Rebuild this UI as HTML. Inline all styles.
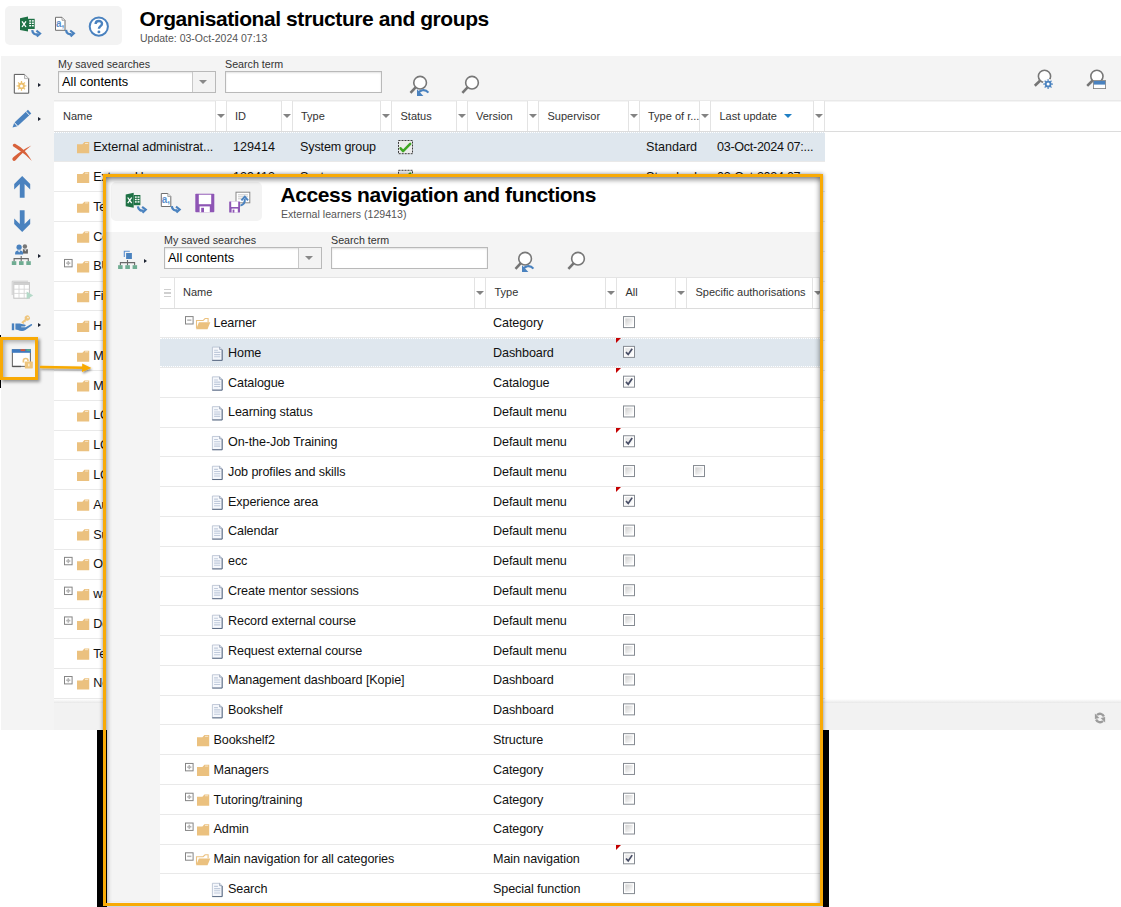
<!DOCTYPE html>
<html><head><meta charset="utf-8"><title>Organisational structure and groups</title>
<style>
*{box-sizing:border-box}
html,body{margin:0;padding:0}
body{width:1121px;height:907px;position:relative;overflow:hidden;background:#fff;font-family:"Liberation Sans",sans-serif;color:#1a1a1a}
.a{position:absolute}
.t{position:absolute;white-space:nowrap;line-height:1}
.h{font-size:11px;color:#333}
.r{font-size:12.6px;color:#111}
.lbl{font-size:10.7px;color:#333}
.inp{position:absolute;background:#fff;border:1px solid #b9b9b9;box-shadow:inset 0 1px 2px rgba(0,0,0,.12)}
.ddb{position:absolute;background:#f3f3f3;border-left:1px solid #c8c8c8}
.fb{position:absolute;border-left:1px solid #e3e3e3;border-right:1px solid #e3e3e3;background:#fff}
.tri{position:absolute;width:0;height:0;border-left:4px solid transparent;border-right:4px solid transparent;border-top:4.3px solid #838383}
.ln{position:absolute;height:1px;background:#e9e9e9}
svg{position:absolute;overflow:visible}
</style></head>
<body>
<svg width="0" height="0" style="left:0;top:0"><defs><filter id="ds" x="-20%" y="-50%" width="140%" height="250%"><feDropShadow dx="1" dy="1.5" stdDeviation="1" flood-color="#000" flood-opacity=".45"/></filter><linearGradient id="cg" x1="0" y1="0" x2="1" y2="1"><stop offset="0" stop-color="#cfcfcf"/><stop offset="1" stop-color="#ffffff"/></linearGradient></defs></svg>
<div class="a" style="left:5px;top:6px;width:117px;height:39px;background:#f3f3f3;border-radius:5px"></div>
<svg style="left:19px;top:15px;" width="24" height="24" viewBox="0 0 24 24"><path d="M1 3.2 L9 1.6 V16.6 L1 15 Z" fill="#1e7145"/><rect x="9" y="3.8" width="6.7" height="10.2" fill="#1e7145"/><g fill="#fff"><rect x="10.2" y="5.2" width="1.8" height="1.4"/><rect x="12.8" y="5.2" width="2" height="1.4"/><rect x="10.2" y="7.6" width="1.8" height="1.4"/><rect x="12.8" y="7.6" width="2" height="1.4"/><rect x="10.2" y="10" width="1.8" height="1.4"/><rect x="12.8" y="10" width="2" height="1.4"/></g><path d="M3 6.3 L7 12 M7 6.3 L3 12" stroke="#fff" stroke-width="1.3" fill="none"/><g transform="translate(12.4,14.7)"><path d="M0.8 0.4 C1.2 4 3.8 5.4 6.6 4.5" fill="none" stroke="#4a82bf" stroke-width="2.3" stroke-linecap="butt"/><path d="M5 1 L8.7 3.8 L5.4 6.9" fill="none" stroke="#4a82bf" stroke-width="2.1" stroke-linejoin="miter"/></g></svg>
<svg style="left:54px;top:14px;" width="24" height="24" viewBox="0 0 24 24"><g transform="translate(0,0.8)"><path d="M1.5 2.5 H8 L11 5.5 V15.5 H1.5 Z" fill="#fff" stroke="#6f6f6f" stroke-width="1"/><path d="M8 2.5 V5.5 H11" fill="#e8e8e8" stroke="#8a8a8a" stroke-width=".7"/><text x="2" y="12.2" font-family="Liberation Sans" font-size="11.5" font-weight="bold" fill="#5b8fcb" textLength="8.2" lengthAdjust="spacingAndGlyphs">a,</text><g transform="translate(11.2,14.7)"><path d="M0.8 0.4 C1.2 4 3.8 5.4 6.6 4.5" fill="none" stroke="#4a82bf" stroke-width="2.3" stroke-linecap="butt"/><path d="M5 1 L8.7 3.8 L5.4 6.9" fill="none" stroke="#4a82bf" stroke-width="2.1" stroke-linejoin="miter"/></g></g></svg>
<svg style="left:87px;top:14px;" width="24" height="24" viewBox="0 0 24 24"><g transform="translate(0,0.4)"><circle cx="11.8" cy="12.2" r="9.1" fill="#fff" stroke="#4a82bf" stroke-width="2"/><path d="M8.6 9.6 C8.6 5.6 15 5.6 15 9.4 C15 11.8 11.9 11.8 11.9 14.4" fill="none" stroke="#4a82bf" stroke-width="2.4"/><circle cx="11.9" cy="17.5" r="1.45" fill="#4a82bf"/></g></svg>
<div class="t" style="left:139.5px;top:8.2px;font-size:21px;letter-spacing:-0.42px;font-weight:bold;color:#000">Organisational structure and groups</div>
<div class="t" style="left:140px;top:33px;font-size:10.5px;color:#555">Update: 03-Oct-2024 07:13</div>
<div class="a" style="left:1px;top:56px;width:1120px;height:674px;background:#f4f4f4"></div>
<div class="a" style="left:54px;top:101.5px;width:1067px;height:601.5px;background:#fff"></div>
<div class="a" style="left:54px;top:702.6px;width:1067px;height:27.4px;background:#f2f2f2"></div>
<div class="a" style="left:54px;top:698.8px;width:1067px;height:4.2px;background:linear-gradient(#fff,#e8e8e8)"></div>
<svg style="left:1093px;top:711px;" width="14" height="14" viewBox="0 0 14 14"><g fill="#9c9c9c" stroke="none"><path d="M10.9 5.5 A4.1 4.1 0 0 0 4 4.1" fill="none" stroke="#9c9c9c" stroke-width="2.3"/><path d="M1.9 2.5 V7.9 L6.4 7.1 Z"/><path d="M3.1 8.5 A4.1 4.1 0 0 0 10 9.9" fill="none" stroke="#9c9c9c" stroke-width="2.3"/><path d="M12.1 11.5 V6.1 L7.6 6.9 Z"/></g></svg>
<div class="t lbl" style="left:58px;top:59px">My saved searches</div>
<div class="inp" style="left:58px;top:71px;width:158px;height:22px"></div>
<div class="ddb" style="left:192px;top:72px;width:23px;height:20px"></div>
<div class="tri" style="left:199px;top:80px;border-top-color:#888"></div>
<div class="t" style="left:62px;top:75.8px;font-size:12.8px;color:#000">All contents</div>
<div class="t lbl" style="left:225px;top:59px">Search term</div>
<div class="inp" style="left:225px;top:71px;width:157px;height:22px"></div>
<svg style="left:409px;top:74px;" width="26" height="26" viewBox="0 0 26 26"><path d="M6.59 13.45 L1.50 18.80" stroke="#757575" stroke-width="2.6" stroke-linecap="butt"/><circle cx="11.1" cy="8.7" r="6.35" fill="#fff" stroke="#777" stroke-width="1.6"/><path d="M9.2 19.6 C10.4 16 16 14.4 19.4 18.6" fill="none" stroke="#4a82bf" stroke-width="2.1"/><path d="M8 15.2 V22 H14.4 Z" fill="#4a82bf"/></svg>
<svg style="left:459px;top:74px;" width="26" height="26" viewBox="0 0 26 26"><path d="M8.49 13.45 L3.40 18.80" stroke="#757575" stroke-width="2.6" stroke-linecap="butt"/><circle cx="13" cy="8.7" r="6.35" fill="#fff" stroke="#777" stroke-width="1.6"/></svg>
<svg style="left:1032px;top:70px;" width="26" height="26" viewBox="0 0 26 26"><path d="M8.00 10.71 L2.80 15.80" stroke="#757575" stroke-width="2.6" stroke-linecap="butt"/><circle cx="12.5" cy="6.3" r="6.1" fill="#fff" stroke="#777" stroke-width="1.6"/><circle cx="16.1" cy="14.1" r="5.4" fill="#f4f4f4"/><path d="M20.95 13.41 L20.95 14.79 L19.57 14.59 L18.90 16.20 L20.02 17.04 L19.04 18.02 L18.20 16.90 L16.59 17.57 L16.79 18.95 L15.41 18.95 L15.61 17.57 L14.00 16.90 L13.16 18.02 L12.18 17.04 L13.30 16.20 L12.63 14.59 L11.25 14.79 L11.25 13.41 L12.63 13.61 L13.30 12.00 L12.18 11.16 L13.16 10.18 L14.00 11.30 L15.61 10.63 L15.41 9.25 L16.79 9.25 L16.59 10.63 L18.20 11.30 L19.04 10.18 L20.02 11.16 L18.90 12.00 L19.57 13.61Z" fill="#4a82bf"/><circle cx="16.1" cy="14.1" r="1.5" fill="#fff"/></svg>
<svg style="left:1085px;top:70px;" width="26" height="26" viewBox="0 0 26 26"><path d="M7.42 10.73 L2.20 15.90" stroke="#757575" stroke-width="2.6" stroke-linecap="butt"/><circle cx="11.9" cy="6.3" r="6.1" fill="#fff" stroke="#777" stroke-width="1.6"/><rect x="8.4" y="10.6" width="12.2" height="8" fill="#fff" stroke="#7a7a7a" stroke-width=".8"/><rect x="8.8" y="11" width="11.4" height="3.6" fill="#4a82bf"/></svg>
<div class="a" style="left:54px;top:100.3px;width:1067px;height:1.2px;background:#e9e9e9"></div>
<div class="a" style="left:54px;top:131px;width:1067px;height:1px;background:#dcdcdc"></div>
<div class="t h" style="left:63.0px;top:111px">Name</div>
<div class="fb" style="left:214.5px;top:101px;width:12px;height:30px"></div>
<div class="tri" style="left:216.5px;top:114px"></div>
<div class="t h" style="left:235.0px;top:111px">ID</div>
<div class="fb" style="left:280.5px;top:101px;width:12px;height:30px"></div>
<div class="tri" style="left:282.5px;top:114px"></div>
<div class="t h" style="left:301.0px;top:111px">Type</div>
<div class="fb" style="left:380px;top:101px;width:12px;height:30px"></div>
<div class="tri" style="left:382px;top:114px"></div>
<div class="t h" style="left:400.5px;top:111px">Status</div>
<div class="fb" style="left:455.5px;top:101px;width:12px;height:30px"></div>
<div class="tri" style="left:457.5px;top:114px"></div>
<div class="t h" style="left:476.0px;top:111px">Version</div>
<div class="fb" style="left:527px;top:101px;width:12px;height:30px"></div>
<div class="tri" style="left:529px;top:114px"></div>
<div class="t h" style="left:547.5px;top:111px">Supervisor</div>
<div class="fb" style="left:627.5px;top:101px;width:12px;height:30px"></div>
<div class="tri" style="left:629.5px;top:114px"></div>
<div class="t h" style="left:648.0px;top:111px">Type of r...</div>
<div class="fb" style="left:699px;top:101px;width:12px;height:30px"></div>
<div class="tri" style="left:701px;top:114px"></div>
<div class="t h" style="left:719.5px;top:111px">Last update</div>
<div class="fb" style="left:812.5px;top:101px;width:12px;height:30px"></div>
<div class="tri" style="left:814.5px;top:114px"></div>
<div class="tri" style="left:783.5px;top:114px;border-top-color:#1f7fc4"></div>
<div class="a" style="left:54px;top:132.2px;width:770.5px;height:29.49px;background:#dfe7ee;border-top:1px dotted #fff;border-bottom:1px dotted #fff"></div>
<div class="ln" style="left:54px;top:161.49px;width:770.5px"></div>
<svg style="left:77px;top:141px;" width="13" height="12" viewBox="0 0 13 12"><g transform="translate(0,0.9)"><path d="M0 2.4 H5.4 L7.4 0.2 H12.2 V11.4 H0 Z" fill="#ebc17f"/><rect x="8" y="1.1" width="3.2" height=".7" fill="#fff" opacity=".85"/></g></svg>
<div class="t r" style="left:93.3px;top:140.7px;letter-spacing:-0.08px">External administrat...</div>
<div class="t r" style="left:233px;top:140.7px">129414</div>
<div class="t r" style="left:300px;top:140.7px;letter-spacing:-0.15px">System group</div>
<svg style="left:398px;top:139px;" width="16" height="16" viewBox="0 0 16 16"><g transform="translate(0,0.9)"><rect x="0.5" y="0.6" width="14" height="13.2" fill="#ececec" stroke="#3c3c3c" stroke-width="1" stroke-dasharray="2 1"/><path d="M2.6 8.4 L5.1 11.2 L12.2 3.9" fill="none" stroke="#3fa624" stroke-width="2.5" stroke-linecap="round" stroke-linejoin="round"/></g></svg>
<div class="t r" style="left:646px;top:140.7px">Standard</div>
<div class="t r" style="left:717px;top:140.7px;letter-spacing:-0.3px">03-Oct-2024 07:...</div>
<div class="ln" style="left:54px;top:191.28px;width:770.5px"></div>
<svg style="left:77px;top:171px;" width="13" height="12" viewBox="0 0 13 12"><g transform="translate(0,0.69)"><path d="M0 2.4 H5.4 L7.4 0.2 H12.2 V11.4 H0 Z" fill="#ebc17f"/><rect x="8" y="1.1" width="3.2" height=".7" fill="#fff" opacity=".85"/></g></svg>
<div class="t r" style="left:93.3px;top:170.7px;letter-spacing:-0.25px">External learners</div>
<div class="t r" style="left:233px;top:170.7px">129413</div>
<div class="t r" style="left:300px;top:170.7px;letter-spacing:-0.15px">System group</div>
<svg style="left:398px;top:169px;" width="16" height="16" viewBox="0 0 16 16"><g transform="translate(0,0.69)"><rect x="0.5" y="0.6" width="14" height="13.2" fill="#ececec" stroke="#3c3c3c" stroke-width="1" stroke-dasharray="2 1"/><path d="M2.6 8.4 L5.1 11.2 L12.2 3.9" fill="none" stroke="#3fa624" stroke-width="2.5" stroke-linecap="round" stroke-linejoin="round"/></g></svg>
<div class="t r" style="left:646px;top:170.7px">Standard</div>
<div class="t r" style="left:717px;top:170.7px;letter-spacing:-0.3px">03-Oct-2024 07:...</div>
<div class="ln" style="left:54px;top:221.07px;width:770.5px"></div>
<svg style="left:77px;top:201px;" width="13" height="12" viewBox="0 0 13 12"><g transform="translate(0,0.47)"><path d="M0 2.4 H5.4 L7.4 0.2 H12.2 V11.4 H0 Z" fill="#ebc17f"/><rect x="8" y="1.1" width="3.2" height=".7" fill="#fff" opacity=".85"/></g></svg>
<div class="t r" style="left:93.3px;top:200.7px;letter-spacing:-0.25px">Test</div>
<div class="ln" style="left:54px;top:250.86px;width:770.5px"></div>
<svg style="left:77px;top:231px;" width="13" height="12" viewBox="0 0 13 12"><g transform="translate(0,0.27)"><path d="M0 2.4 H5.4 L7.4 0.2 H12.2 V11.4 H0 Z" fill="#ebc17f"/><rect x="8" y="1.1" width="3.2" height=".7" fill="#fff" opacity=".85"/></g></svg>
<div class="t r" style="left:93.3px;top:230.7px;letter-spacing:-0.25px">Co</div>
<div class="ln" style="left:54px;top:280.65px;width:770.5px"></div>
<svg style="left:77px;top:261px;" width="13" height="12" viewBox="0 0 13 12"><g transform="translate(0,0.06)"><path d="M0 2.4 H5.4 L7.4 0.2 H12.2 V11.4 H0 Z" fill="#ebc17f"/><rect x="8" y="1.1" width="3.2" height=".7" fill="#fff" opacity=".85"/></g></svg>
<svg style="left:64px;top:258px;" width="9" height="9" viewBox="0 0 9 9"><g transform="translate(0,0.95)"><rect x="0.5" y="0.5" width="7.6" height="7.4" fill="#fff" stroke="#858585" stroke-width="1"/><rect x="2.2" y="3.4" width="4.2" height="1.6" fill="#b5b5b5"/><rect x="3.5" y="2.1" width="1.6" height="4.2" fill="#b5b5b5"/></g></svg>
<div class="t r" style="left:93.3px;top:259.7px;letter-spacing:-0.25px">BU</div>
<div class="ln" style="left:54px;top:310.44px;width:770.5px"></div>
<svg style="left:77px;top:290px;" width="13" height="12" viewBox="0 0 13 12"><g transform="translate(0,0.84)"><path d="M0 2.4 H5.4 L7.4 0.2 H12.2 V11.4 H0 Z" fill="#ebc17f"/><rect x="8" y="1.1" width="3.2" height=".7" fill="#fff" opacity=".85"/></g></svg>
<div class="t r" style="left:93.3px;top:289.7px;letter-spacing:-0.25px">Fi</div>
<div class="ln" style="left:54px;top:340.23px;width:770.5px"></div>
<svg style="left:77px;top:320px;" width="13" height="12" viewBox="0 0 13 12"><g transform="translate(0,0.63)"><path d="M0 2.4 H5.4 L7.4 0.2 H12.2 V11.4 H0 Z" fill="#ebc17f"/><rect x="8" y="1.1" width="3.2" height=".7" fill="#fff" opacity=".85"/></g></svg>
<div class="t r" style="left:93.3px;top:319.7px;letter-spacing:-0.25px">HR</div>
<div class="ln" style="left:54px;top:370.02px;width:770.5px"></div>
<svg style="left:77px;top:350px;" width="13" height="12" viewBox="0 0 13 12"><g transform="translate(0,0.43)"><path d="M0 2.4 H5.4 L7.4 0.2 H12.2 V11.4 H0 Z" fill="#ebc17f"/><rect x="8" y="1.1" width="3.2" height=".7" fill="#fff" opacity=".85"/></g></svg>
<div class="t r" style="left:93.3px;top:349.7px;letter-spacing:-0.25px">MM</div>
<div class="ln" style="left:54px;top:399.81px;width:770.5px"></div>
<svg style="left:77px;top:380px;" width="13" height="12" viewBox="0 0 13 12"><g transform="translate(0,0.21)"><path d="M0 2.4 H5.4 L7.4 0.2 H12.2 V11.4 H0 Z" fill="#ebc17f"/><rect x="8" y="1.1" width="3.2" height=".7" fill="#fff" opacity=".85"/></g></svg>
<div class="t r" style="left:93.3px;top:379.7px;letter-spacing:-0.25px">MM</div>
<div class="ln" style="left:54px;top:429.60px;width:770.5px"></div>
<svg style="left:77px;top:410px;" width="13" height="12" viewBox="0 0 13 12"><path d="M0 2.4 H5.4 L7.4 0.2 H12.2 V11.4 H0 Z" fill="#ebc17f"/><rect x="8" y="1.1" width="3.2" height=".7" fill="#fff" opacity=".85"/></svg>
<div class="t r" style="left:93.3px;top:408.7px;letter-spacing:-0.25px">LC</div>
<div class="ln" style="left:54px;top:459.39px;width:770.5px"></div>
<svg style="left:77px;top:439px;" width="13" height="12" viewBox="0 0 13 12"><g transform="translate(0,0.79)"><path d="M0 2.4 H5.4 L7.4 0.2 H12.2 V11.4 H0 Z" fill="#ebc17f"/><rect x="8" y="1.1" width="3.2" height=".7" fill="#fff" opacity=".85"/></g></svg>
<div class="t r" style="left:93.3px;top:438.7px;letter-spacing:-0.25px">LC</div>
<div class="ln" style="left:54px;top:489.18px;width:770.5px"></div>
<svg style="left:77px;top:469px;" width="13" height="12" viewBox="0 0 13 12"><g transform="translate(0,0.58)"><path d="M0 2.4 H5.4 L7.4 0.2 H12.2 V11.4 H0 Z" fill="#ebc17f"/><rect x="8" y="1.1" width="3.2" height=".7" fill="#fff" opacity=".85"/></g></svg>
<div class="t r" style="left:93.3px;top:468.7px;letter-spacing:-0.25px">LC</div>
<div class="ln" style="left:54px;top:518.97px;width:770.5px"></div>
<svg style="left:77px;top:499px;" width="13" height="12" viewBox="0 0 13 12"><g transform="translate(0,0.38)"><path d="M0 2.4 H5.4 L7.4 0.2 H12.2 V11.4 H0 Z" fill="#ebc17f"/><rect x="8" y="1.1" width="3.2" height=".7" fill="#fff" opacity=".85"/></g></svg>
<div class="t r" style="left:93.3px;top:498.7px;letter-spacing:-0.25px">Au</div>
<div class="ln" style="left:54px;top:548.76px;width:770.5px"></div>
<svg style="left:77px;top:529px;" width="13" height="12" viewBox="0 0 13 12"><g transform="translate(0,0.16)"><path d="M0 2.4 H5.4 L7.4 0.2 H12.2 V11.4 H0 Z" fill="#ebc17f"/><rect x="8" y="1.1" width="3.2" height=".7" fill="#fff" opacity=".85"/></g></svg>
<div class="t r" style="left:93.3px;top:528.7px;letter-spacing:-0.25px">Su</div>
<div class="ln" style="left:54px;top:578.55px;width:770.5px"></div>
<svg style="left:77px;top:558px;" width="13" height="12" viewBox="0 0 13 12"><g transform="translate(0,0.95)"><path d="M0 2.4 H5.4 L7.4 0.2 H12.2 V11.4 H0 Z" fill="#ebc17f"/><rect x="8" y="1.1" width="3.2" height=".7" fill="#fff" opacity=".85"/></g></svg>
<svg style="left:64px;top:556px;" width="9" height="9" viewBox="0 0 9 9"><g transform="translate(0,0.86)"><rect x="0.5" y="0.5" width="7.6" height="7.4" fill="#fff" stroke="#858585" stroke-width="1"/><rect x="2.2" y="3.4" width="4.2" height="1.6" fill="#b5b5b5"/><rect x="3.5" y="2.1" width="1.6" height="4.2" fill="#b5b5b5"/></g></svg>
<div class="t r" style="left:93.3px;top:557.7px;letter-spacing:-0.25px">Or</div>
<div class="ln" style="left:54px;top:608.34px;width:770.5px"></div>
<svg style="left:77px;top:588px;" width="13" height="12" viewBox="0 0 13 12"><g transform="translate(0,0.74)"><path d="M0 2.4 H5.4 L7.4 0.2 H12.2 V11.4 H0 Z" fill="#ebc17f"/><rect x="8" y="1.1" width="3.2" height=".7" fill="#fff" opacity=".85"/></g></svg>
<svg style="left:64px;top:586px;" width="9" height="9" viewBox="0 0 9 9"><g transform="translate(0,0.64)"><rect x="0.5" y="0.5" width="7.6" height="7.4" fill="#fff" stroke="#858585" stroke-width="1"/><rect x="2.2" y="3.4" width="4.2" height="1.6" fill="#b5b5b5"/><rect x="3.5" y="2.1" width="1.6" height="4.2" fill="#b5b5b5"/></g></svg>
<div class="t r" style="left:93.3px;top:587.7px;letter-spacing:-0.25px">w3</div>
<div class="ln" style="left:54px;top:638.13px;width:770.5px"></div>
<svg style="left:77px;top:618px;" width="13" height="12" viewBox="0 0 13 12"><g transform="translate(0,0.53)"><path d="M0 2.4 H5.4 L7.4 0.2 H12.2 V11.4 H0 Z" fill="#ebc17f"/><rect x="8" y="1.1" width="3.2" height=".7" fill="#fff" opacity=".85"/></g></svg>
<svg style="left:64px;top:616px;" width="9" height="9" viewBox="0 0 9 9"><g transform="translate(0,0.43)"><rect x="0.5" y="0.5" width="7.6" height="7.4" fill="#fff" stroke="#858585" stroke-width="1"/><rect x="2.2" y="3.4" width="4.2" height="1.6" fill="#b5b5b5"/><rect x="3.5" y="2.1" width="1.6" height="4.2" fill="#b5b5b5"/></g></svg>
<div class="t r" style="left:93.3px;top:617.7px;letter-spacing:-0.25px">De</div>
<div class="ln" style="left:54px;top:667.92px;width:770.5px"></div>
<svg style="left:77px;top:648px;" width="13" height="12" viewBox="0 0 13 12"><g transform="translate(0,0.32)"><path d="M0 2.4 H5.4 L7.4 0.2 H12.2 V11.4 H0 Z" fill="#ebc17f"/><rect x="8" y="1.1" width="3.2" height=".7" fill="#fff" opacity=".85"/></g></svg>
<div class="t r" style="left:93.3px;top:647.7px;letter-spacing:-0.25px">Te</div>
<div class="ln" style="left:54px;top:697.71px;width:770.5px"></div>
<svg style="left:77px;top:678px;" width="13" height="12" viewBox="0 0 13 12"><g transform="translate(0,0.12)"><path d="M0 2.4 H5.4 L7.4 0.2 H12.2 V11.4 H0 Z" fill="#ebc17f"/><rect x="8" y="1.1" width="3.2" height=".7" fill="#fff" opacity=".85"/></g></svg>
<svg style="left:64px;top:676px;" width="9" height="9" viewBox="0 0 9 9"><g transform="translate(0,0.02)"><rect x="0.5" y="0.5" width="7.6" height="7.4" fill="#fff" stroke="#858585" stroke-width="1"/><rect x="2.2" y="3.4" width="4.2" height="1.6" fill="#b5b5b5"/><rect x="3.5" y="2.1" width="1.6" height="4.2" fill="#b5b5b5"/></g></svg>
<div class="t r" style="left:93.3px;top:676.7px;letter-spacing:-0.25px">Ne</div>
<svg style="left:13px;top:73px;" width="18" height="22" viewBox="0 0 18 22"><path d="M1.3 1.4 H11.5 L15.7 5.6 V20.2 H1.3 Z" fill="#fff" stroke="#555" stroke-width="1"/><path d="M11.5 1.4 V5.6 H15.7" fill="#eee" stroke="#999" stroke-width=".7"/><path d="M13.35 12.21 L13.35 13.59 L11.97 13.39 L11.30 15.00 L12.42 15.84 L11.44 16.82 L10.60 15.70 L8.99 16.37 L9.19 17.75 L7.81 17.75 L8.01 16.37 L6.40 15.70 L5.56 16.82 L4.58 15.84 L5.70 15.00 L5.03 13.39 L3.65 13.59 L3.65 12.21 L5.03 12.41 L5.70 10.80 L4.58 9.96 L5.56 8.98 L6.40 10.10 L8.01 9.43 L7.81 8.05 L9.19 8.05 L8.99 9.43 L10.60 10.10 L11.44 8.98 L12.42 9.96 L11.30 10.80 L11.97 12.41Z" fill="#ecc06e"/><circle cx="8.5" cy="12.9" r="1.5" fill="#fff"/></svg>
<div class="a" style="left:38px;top:82.60000000000001px;width:0;height:0;border-top:2.5px solid transparent;border-bottom:2.5px solid transparent;border-left:3.2px solid #1c2230"></div>
<svg style="left:12px;top:109px;" width="22" height="20" viewBox="0 0 22 20"><g transform="translate(2.5,-2.6) rotate(-43 10 10)"><path d="M-1.5 7.6 H17 V12.4 H-1.5 Z" fill="#4a82bf"/><path d="M-1.8 7.6 L-6.4 10 L-1.8 12.4 Z" fill="#4a82bf"/><path d="M-1.7 7 V13" stroke="#f4f4f4" stroke-width=".9"/><path d="M14.4 7 V13" stroke="#f4f4f4" stroke-width=".9"/></g></svg>
<div class="a" style="left:38px;top:116.9px;width:0;height:0;border-top:2.5px solid transparent;border-bottom:2.5px solid transparent;border-left:3.2px solid #1c2230"></div>
<svg style="left:12px;top:143px;" width="22" height="20" viewBox="0 0 22 20"><path d="M1 3.2 C0.2 1.6 1.8 0.2 3.8 1.2 C10.5 4.6 16.2 11 19.8 18 C15.4 13 9.5 8.6 1 3.2 Z" fill="#d8613a"/><path d="M0.6 17 C-0.2 15.6 1 14.6 2.2 13.6 C7 9.4 12.6 5.4 19.4 2.4 C13.6 6.8 8.4 11.6 3.6 17.2 C2.6 18.4 1.2 18.2 0.6 17 Z" fill="#d8613a"/></svg>
<svg style="left:12px;top:176px;" width="22" height="24" viewBox="0 0 22 24"><path d="M10.2 0 L18.2 8 V13.6 L12.6 8 V21.8 H7.8 V8 L2.2 13.6 V8 Z" fill="#4a82bf"/></svg>
<svg style="left:12px;top:210px;" width="22" height="24" viewBox="0 0 22 24"><path d="M10.2 22 L18.2 14 V8.4 L12.6 14 V0.2 H7.8 V14 L2.2 8.4 V14 Z" fill="#4a82bf"/></svg>
<svg style="left:11px;top:243px;" width="22" height="24" viewBox="0 0 22 24"><g transform="translate(1.5,0.6)"><circle cx="12.4" cy="2.9" r="2.2" fill="#777"/><path d="M10.4 5.6 H15.4 V10 H10.4Z" fill="#666"/><path d="M11.6 5.6 L12.9 8 L14.2 5.6Z" fill="#ddd"/><circle cx="6.6" cy="3.6" r="2.6" fill="#4a82bf"/><path d="M2.6 11 V9.4 C2.6 5.6 10.6 5.6 10.6 9.4 V11 Z" fill="#4a82bf"/><path d="M5.4 6.8 L6.6 8.8 L7.8 6.8Z" fill="#fff"/><path d="M1.6 17.8 V15 H15.8 V17.8 M8.7 12.4 V17.8" fill="none" stroke="#6a6a6a" stroke-width="1.1"/><g fill="#6fac92"><rect x="-0.7" y="17.6" width="4.5" height="3.8"/><rect x="6.5" y="17.6" width="4.6" height="3.8"/><rect x="13.8" y="17.6" width="4.5" height="3.8"/></g></g></svg>
<div class="a" style="left:38.2px;top:253.7px;width:0;height:0;border-top:2.5px solid transparent;border-bottom:2.5px solid transparent;border-left:3.2px solid #1c2230"></div>
<svg style="left:11px;top:280px;" width="24" height="22" viewBox="0 0 24 22"><path d="M1.2 15 V1.2 H17" fill="none" stroke="#cdcdcd" stroke-width="1"/><rect x="2.8" y="2.6" width="15.6" height="15.6" fill="#fff" stroke="#c2c2c2" stroke-width="1"/><rect x="2.8" y="2.6" width="15.6" height="2.4" fill="#cfcfcf"/><path d="M2.8 9.2 H18.4 M2.8 13.4 H18.4 M8 5 V18.2 M13.2 5 V18.2" stroke="#d6d6d6" stroke-width=".9"/><path d="M15.6 11.6 L22.2 15.4 L15.6 19.2Z" fill="#b4d9c8"/></svg>
<svg style="left:11px;top:312px;" width="24" height="22" viewBox="0 0 24 22"><g transform="translate(0,0.4)"><rect x="0.8" y="11" width="2.4" height="6.8" fill="#4a82bf"/><path d="M4.4 11.2 H8.6 C10.4 11.2 11.2 12.2 13.4 12.2 C15.2 12.2 15 14 13.6 14.1 H10.2 V14.8 H14.6 L19.8 11.8 C21 11.2 21.6 12.4 20.8 13.1 L14.4 17.6 C12.4 19 9 18.6 7 17.6 L4.4 17.2 Z" fill="#4a82bf"/><g transform="translate(0.2,1.4) rotate(-40 14.6 5.6)"><circle cx="16.6" cy="5.6" r="2.6" fill="#eec57d"/><circle cx="17.4" cy="5.6" r=".8" fill="#f4f4f4"/><rect x="9.4" y="4.8" width="5.4" height="1.7" fill="#eec57d"/><rect x="9.8" y="6" width="1.3" height="1.6" fill="#eec57d"/><rect x="11.9" y="6" width="1.3" height="1.4" fill="#eec57d"/></g></g></svg>
<div class="a" style="left:38px;top:322.5px;width:0;height:0;border-top:2.5px solid transparent;border-bottom:2.5px solid transparent;border-left:3.2px solid #1c2230"></div>
<div class="a" style="left:0px;top:337px;width:38px;height:43px;border:3px solid #f8aa06;box-shadow:2px 2px 3px rgba(0,0,0,.4),inset 3px 3px 4px -1px rgba(0,0,0,.3)"></div>
<svg style="left:11px;top:348px;" width="24" height="22" viewBox="0 0 24 22"><rect x="1.4" y="1.8" width="18" height="16.6" fill="#fff" stroke="#6e6e6e" stroke-width="1.1"/><rect x="0.9" y="1.2" width="19" height="3.6" fill="#3f7ac0"/><rect x="9.6" y="1.2" width="4.6" height="1.9" fill="#d9573c"/><rect x="15.4" y="1.2" width="4" height="1.9" fill="#5aa989"/><path d="M1.4 18.5 H10" stroke="#555" stroke-width="1.3"/><path d="M12.4 14.6 V12.6 C12.4 9.8 17 9.8 17 12.6 V13.2" fill="none" stroke="#eec57d" stroke-width="1.7"/><rect x="13.8" y="13.6" width="8" height="6.8" rx=".6" fill="#eec57d"/><rect x="17.3" y="15.6" width="1.1" height="2.8" fill="#fff8e8"/></svg>
<svg style="left:38px;top:358px" width="56" height="20" viewBox="0 0 56 20"><g filter="url(#ds)"><path d="M3 9 L46 9.8" stroke="#f8aa06" stroke-width="2.6" fill="none" stroke-linecap="round"/><path d="M44.2 5.6 L53.4 9.9 L44 13.9 Z" fill="#f8aa06"/></g></svg>
<div class="a" style="left:0;top:380px;width:1px;height:8px;background:#000"></div>
<div class="a" style="left:0;top:335px;width:1px;height:2px;background:#000"></div>
<div class="a" style="left:97px;top:730px;width:732px;height:177px;background:#000"></div>
<div class="a" style="left:103px;top:174px;width:720px;height:732px;background:#fff;border:3px solid #f8aa06;box-shadow:0 0 4px rgba(0,0,0,.45)"></div>
<div class="a" style="left:111px;top:182px;width:151px;height:39px;background:#f3f3f3;border-radius:5px"></div>
<svg style="left:124px;top:191px;" width="24" height="24" viewBox="0 0 24 24"><g transform="translate(0.7,0.2)"><path d="M1 3.2 L9 1.6 V16.6 L1 15 Z" fill="#1e7145"/><rect x="9" y="3.8" width="6.7" height="10.2" fill="#1e7145"/><g fill="#fff"><rect x="10.2" y="5.2" width="1.8" height="1.4"/><rect x="12.8" y="5.2" width="2" height="1.4"/><rect x="10.2" y="7.6" width="1.8" height="1.4"/><rect x="12.8" y="7.6" width="2" height="1.4"/><rect x="10.2" y="10" width="1.8" height="1.4"/><rect x="12.8" y="10" width="2" height="1.4"/></g><path d="M3 6.3 L7 12 M7 6.3 L3 12" stroke="#fff" stroke-width="1.3" fill="none"/><g transform="translate(12.4,14.7)"><path d="M0.8 0.4 C1.2 4 3.8 5.4 6.6 4.5" fill="none" stroke="#4a82bf" stroke-width="2.3" stroke-linecap="butt"/><path d="M5 1 L8.7 3.8 L5.4 6.9" fill="none" stroke="#4a82bf" stroke-width="2.1" stroke-linejoin="miter"/></g></g></svg>
<svg style="left:159px;top:191px;" width="24" height="24" viewBox="0 0 24 24"><g transform="translate(0.8,0)"><path d="M1.5 2.5 H8 L11 5.5 V15.5 H1.5 Z" fill="#fff" stroke="#6f6f6f" stroke-width="1"/><path d="M8 2.5 V5.5 H11" fill="#e8e8e8" stroke="#8a8a8a" stroke-width=".7"/><text x="2" y="12.2" font-family="Liberation Sans" font-size="11.5" font-weight="bold" fill="#5b8fcb" textLength="8.2" lengthAdjust="spacingAndGlyphs">a,</text><g transform="translate(11.2,14.7)"><path d="M0.8 0.4 C1.2 4 3.8 5.4 6.6 4.5" fill="none" stroke="#4a82bf" stroke-width="2.3" stroke-linecap="butt"/><path d="M5 1 L8.7 3.8 L5.4 6.9" fill="none" stroke="#4a82bf" stroke-width="2.1" stroke-linejoin="miter"/></g></g></svg>
<svg style="left:194px;top:193px;" width="22" height="22" viewBox="0 0 22 22"><rect x="1.3" y="0.8" width="19" height="18.4" rx=".8" fill="#8e55b5"/><rect x="4.8" y="1.7" width="12.4" height="9.5" fill="#fff"/><rect x="5.6" y="13.4" width="10.2" height="5.8" fill="#fff"/><rect x="7.2" y="14.8" width="2.8" height="4.4" fill="#8e55b5"/></svg>
<svg style="left:228px;top:191px;" width="24" height="24" viewBox="0 0 24 24"><rect x="8" y="1.2" width="13.8" height="10.6" fill="#fff" stroke="#8a8a8a" stroke-width="1"/><path d="M10 3.8 H20 M10 5.8 H20 M10 7.8 H14" stroke="#c9c9c9" stroke-width="1"/><rect x="1.2" y="10.4" width="10.8" height="11.2" rx=".5" fill="#8e55b5"/><rect x="3.2" y="10.4" width="7" height="5.6" fill="#fff"/><rect x="3.6" y="17.6" width="6.2" height="4" fill="#fff"/><rect x="4.6" y="18.6" width="1.8" height="3" fill="#8e55b5"/><path d="M12.4 14.4 C16 14 17 11 16.8 7.6" fill="none" stroke="#4a82bf" stroke-width="2"/><path d="M13.4 9.4 L16.8 5.6 L20 9.4" fill="none" stroke="#4a82bf" stroke-width="1.9"/></svg>
<div class="t" style="left:280.5px;top:184.2px;font-size:21px;letter-spacing:-0.4px;font-weight:bold;color:#000">Access navigation and functions</div>
<div class="t" style="left:281px;top:209px;font-size:10.6px;color:#555">External learners (129413)</div>
<div class="a" style="left:106px;top:232px;width:714px;height:670px;background:#f4f4f4"></div>
<div class="a" style="left:160px;top:278px;width:660px;height:624px;background:#fff"></div>
<svg style="left:118px;top:250px;" width="22" height="22" viewBox="0 0 22 22"><g transform="translate(0.8,-2.4)"><path d="M5.5 9.4 V3.6 H11" fill="none" stroke="#5b90cf" stroke-width="1.1"/><rect x="7.3" y="5.4" width="5.8" height="6" fill="#4a82bf"/><path d="M1.6 17.8 V15 H15.8 V17.8 M8.7 12.4 V17.8" fill="none" stroke="#6a6a6a" stroke-width="1.1"/><g fill="#6fac92"><rect x="-0.7" y="17.6" width="4.5" height="3.8"/><rect x="6.5" y="17.6" width="4.6" height="3.8"/><rect x="13.8" y="17.6" width="4.5" height="3.8"/></g></g></svg>
<div class="a" style="left:144.1px;top:258.59999999999997px;width:0;height:0;border-top:2.5px solid transparent;border-bottom:2.5px solid transparent;border-left:3.2px solid #1c2230"></div>
<div class="t lbl" style="left:164px;top:235px">My saved searches</div>
<div class="inp" style="left:164px;top:247px;width:158px;height:22px"></div>
<div class="ddb" style="left:298px;top:248px;width:23px;height:20px"></div>
<div class="tri" style="left:305px;top:256px;border-top-color:#888"></div>
<div class="t" style="left:168px;top:251.8px;font-size:12.8px;color:#000">All contents</div>
<div class="t lbl" style="left:331px;top:235px">Search term</div>
<div class="inp" style="left:331px;top:247px;width:157px;height:22px"></div>
<svg style="left:514px;top:250px;" width="26" height="26" viewBox="0 0 26 26"><path d="M6.59 13.45 L1.50 18.80" stroke="#757575" stroke-width="2.6" stroke-linecap="butt"/><circle cx="11.1" cy="8.7" r="6.35" fill="#fff" stroke="#777" stroke-width="1.6"/><path d="M9.2 19.6 C10.4 16 16 14.4 19.4 18.6" fill="none" stroke="#4a82bf" stroke-width="2.1"/><path d="M8 15.2 V22 H14.4 Z" fill="#4a82bf"/></svg>
<svg style="left:565px;top:250px;" width="26" height="26" viewBox="0 0 26 26"><path d="M8.49 13.45 L3.40 18.80" stroke="#757575" stroke-width="2.6" stroke-linecap="butt"/><circle cx="13" cy="8.7" r="6.35" fill="#fff" stroke="#777" stroke-width="1.6"/></svg>
<div class="a" style="left:160px;top:277px;width:660px;height:1px;background:#e4e4e4"></div>
<div class="a" style="left:160px;top:308px;width:660px;height:1px;background:#dcdcdc"></div>
<div class="a" style="left:174px;top:278px;width:1px;height:30px;background:#e3e3e3"></div>
<div class="a" style="left:164px;top:288.5px;width:6.5px;height:1.5px;background:#cfcfcf"></div>
<div class="a" style="left:164px;top:292.0px;width:6.5px;height:1.5px;background:#cfcfcf"></div>
<div class="a" style="left:164px;top:295.5px;width:6.5px;height:1.5px;background:#cfcfcf"></div>
<div class="t h" style="left:183.0px;top:287px">Name</div>
<div class="fb" style="left:474px;top:278px;width:12px;height:30px"></div>
<div class="a" style="left:476px;top:291px;width:8px;height:5px;overflow:hidden"><div class="tri" style="left:0;top:0"></div></div>
<div class="t h" style="left:494.5px;top:287px">Type</div>
<div class="fb" style="left:605px;top:278px;width:12px;height:30px"></div>
<div class="a" style="left:607px;top:291px;width:8px;height:5px;overflow:hidden"><div class="tri" style="left:0;top:0"></div></div>
<div class="t h" style="left:625.5px;top:287px">All</div>
<div class="fb" style="left:675px;top:278px;width:12px;height:30px"></div>
<div class="a" style="left:677px;top:291px;width:8px;height:5px;overflow:hidden"><div class="tri" style="left:0;top:0"></div></div>
<div class="t h" style="left:695.5px;top:287px">Specific authorisations</div>
<div class="fb" style="left:812px;top:278px;width:8px;height:30px"></div>
<div class="a" style="left:814px;top:291px;width:6px;height:5px;overflow:hidden"><div class="tri" style="left:0;top:0"></div></div>
<div class="ln" style="left:160px;top:337.19px;width:660px"></div>
<svg style="left:195px;top:316px;" width="16" height="13" viewBox="0 0 16 13"><g transform="translate(0.5,0.94)"><path d="M1 11.4 V3.6 H7.6 L9.6 1.6 H12.6 V5.2" fill="none" stroke="#ebc17f" stroke-width="1.1"/><path d="M0.6 12.2 L3.4 5.4 H14.8 L12 12.2 Z" fill="#ebc17f"/></g></svg>
<svg style="left:185px;top:316px;" width="9" height="9" viewBox="0 0 9 9"><g transform="translate(0,0.09)"><rect x="0.5" y="0.5" width="7.6" height="7.4" fill="#fff" stroke="#858585" stroke-width="1"/><rect x="2.2" y="3.3" width="4.2" height="1.5" fill="#b5b5b5"/></g></svg>
<div class="t r" style="left:213.5px;top:316.7px;letter-spacing:-0.1px">Learner</div>
<div class="t r" style="left:493px;top:316.7px;letter-spacing:-0.1px">Category</div>
<svg style="left:623px;top:316px;" width="12" height="12" viewBox="0 0 12 12"><g transform="translate(0,0.09)"><rect x="0.5" y="0.5" width="11" height="11" fill="#fff" stroke="#868b92" stroke-width="1"/><rect x="2.3" y="2.3" width="7.4" height="7.4" fill="url(#cg)"/></g></svg>
<div class="a" style="left:160px;top:338.29px;width:660px;height:28.89px;background:#dfe7ee;border-top:1px dotted #fff;border-bottom:1px dotted #fff"></div>
<div class="ln" style="left:160px;top:366.98px;width:660px"></div>
<svg style="left:211px;top:346px;" width="12" height="15" viewBox="0 0 12 15"><g transform="translate(0.5,0.38)"><path d="M0.9 0.7 H8.2 L10.6 3.1 V13.9 H0.9 Z" fill="#f6f8fc" stroke="#b3bdce" stroke-width=".8"/><path d="M0.7 14 H10.7 V3.4" fill="none" stroke="#5a6a83" stroke-width="1"/><path d="M8.2 0.7 V3.1 H10.6" fill="#dfe6f0" stroke="#7d8ba1" stroke-width=".7"/><path d="M2.6 3.8 H6.4 M2.6 6 H8.8 M2.6 8.2 H8.8 M2.6 10.4 H8.8" stroke="#c0cadb" stroke-width="1.1"/></g></svg>
<div class="t r" style="left:228px;top:346.7px;letter-spacing:-0.1px">Home</div>
<div class="t r" style="left:493px;top:346.7px;letter-spacing:-0.1px">Dashboard</div>
<svg style="left:623px;top:345px;" width="12" height="12" viewBox="0 0 12 12"><g transform="translate(0,0.88)"><rect x="0.5" y="0.5" width="11" height="11" fill="#fff" stroke="#868b92" stroke-width="1"/><rect x="2.3" y="2.3" width="7.4" height="7.4" fill="url(#cg)" opacity=".6"/><path d="M3 6.2 L5.2 8.6 L9.2 2.8" fill="none" stroke="#484e66" stroke-width="1.7"/></g></svg>
<div class="a" style="left:616px;top:338.19px;width:0;height:0;border-top:5px solid #c40000;border-right:5px solid transparent"></div>
<div class="ln" style="left:160px;top:396.77px;width:660px"></div>
<svg style="left:211px;top:376px;" width="12" height="15" viewBox="0 0 12 15"><g transform="translate(0.5,0.17)"><path d="M0.9 0.7 H8.2 L10.6 3.1 V13.9 H0.9 Z" fill="#f6f8fc" stroke="#b3bdce" stroke-width=".8"/><path d="M0.7 14 H10.7 V3.4" fill="none" stroke="#5a6a83" stroke-width="1"/><path d="M8.2 0.7 V3.1 H10.6" fill="#dfe6f0" stroke="#7d8ba1" stroke-width=".7"/><path d="M2.6 3.8 H6.4 M2.6 6 H8.8 M2.6 8.2 H8.8 M2.6 10.4 H8.8" stroke="#c0cadb" stroke-width="1.1"/></g></svg>
<div class="t r" style="left:228px;top:376.7px;letter-spacing:-0.1px">Catalogue</div>
<div class="t r" style="left:493px;top:376.7px;letter-spacing:-0.1px">Catalogue</div>
<svg style="left:623px;top:375px;" width="12" height="12" viewBox="0 0 12 12"><g transform="translate(0,0.67)"><rect x="0.5" y="0.5" width="11" height="11" fill="#fff" stroke="#868b92" stroke-width="1"/><rect x="2.3" y="2.3" width="7.4" height="7.4" fill="url(#cg)" opacity=".6"/><path d="M3 6.2 L5.2 8.6 L9.2 2.8" fill="none" stroke="#484e66" stroke-width="1.7"/></g></svg>
<div class="a" style="left:616px;top:367.98px;width:0;height:0;border-top:5px solid #c40000;border-right:5px solid transparent"></div>
<div class="ln" style="left:160px;top:426.56px;width:660px"></div>
<svg style="left:211px;top:405px;" width="12" height="15" viewBox="0 0 12 15"><g transform="translate(0.5,0.96)"><path d="M0.9 0.7 H8.2 L10.6 3.1 V13.9 H0.9 Z" fill="#f6f8fc" stroke="#b3bdce" stroke-width=".8"/><path d="M0.7 14 H10.7 V3.4" fill="none" stroke="#5a6a83" stroke-width="1"/><path d="M8.2 0.7 V3.1 H10.6" fill="#dfe6f0" stroke="#7d8ba1" stroke-width=".7"/><path d="M2.6 3.8 H6.4 M2.6 6 H8.8 M2.6 8.2 H8.8 M2.6 10.4 H8.8" stroke="#c0cadb" stroke-width="1.1"/></g></svg>
<div class="t r" style="left:228px;top:405.7px;letter-spacing:-0.1px">Learning status</div>
<div class="t r" style="left:493px;top:405.7px;letter-spacing:-0.1px">Default menu</div>
<svg style="left:623px;top:405px;" width="12" height="12" viewBox="0 0 12 12"><g transform="translate(0,0.46)"><rect x="0.5" y="0.5" width="11" height="11" fill="#fff" stroke="#868b92" stroke-width="1"/><rect x="2.3" y="2.3" width="7.4" height="7.4" fill="url(#cg)"/></g></svg>
<div class="ln" style="left:160px;top:456.35px;width:660px"></div>
<svg style="left:211px;top:435px;" width="12" height="15" viewBox="0 0 12 15"><g transform="translate(0.5,0.75)"><path d="M0.9 0.7 H8.2 L10.6 3.1 V13.9 H0.9 Z" fill="#f6f8fc" stroke="#b3bdce" stroke-width=".8"/><path d="M0.7 14 H10.7 V3.4" fill="none" stroke="#5a6a83" stroke-width="1"/><path d="M8.2 0.7 V3.1 H10.6" fill="#dfe6f0" stroke="#7d8ba1" stroke-width=".7"/><path d="M2.6 3.8 H6.4 M2.6 6 H8.8 M2.6 8.2 H8.8 M2.6 10.4 H8.8" stroke="#c0cadb" stroke-width="1.1"/></g></svg>
<div class="t r" style="left:228px;top:435.7px;letter-spacing:-0.1px">On-the-Job Training</div>
<div class="t r" style="left:493px;top:435.7px;letter-spacing:-0.1px">Default menu</div>
<svg style="left:623px;top:435px;" width="12" height="12" viewBox="0 0 12 12"><g transform="translate(0,0.25)"><rect x="0.5" y="0.5" width="11" height="11" fill="#fff" stroke="#868b92" stroke-width="1"/><rect x="2.3" y="2.3" width="7.4" height="7.4" fill="url(#cg)" opacity=".6"/><path d="M3 6.2 L5.2 8.6 L9.2 2.8" fill="none" stroke="#484e66" stroke-width="1.7"/></g></svg>
<div class="a" style="left:616px;top:427.56px;width:0;height:0;border-top:5px solid #c40000;border-right:5px solid transparent"></div>
<div class="ln" style="left:160px;top:486.14px;width:660px"></div>
<svg style="left:211px;top:465px;" width="12" height="15" viewBox="0 0 12 15"><g transform="translate(0.5,0.54)"><path d="M0.9 0.7 H8.2 L10.6 3.1 V13.9 H0.9 Z" fill="#f6f8fc" stroke="#b3bdce" stroke-width=".8"/><path d="M0.7 14 H10.7 V3.4" fill="none" stroke="#5a6a83" stroke-width="1"/><path d="M8.2 0.7 V3.1 H10.6" fill="#dfe6f0" stroke="#7d8ba1" stroke-width=".7"/><path d="M2.6 3.8 H6.4 M2.6 6 H8.8 M2.6 8.2 H8.8 M2.6 10.4 H8.8" stroke="#c0cadb" stroke-width="1.1"/></g></svg>
<div class="t r" style="left:228px;top:465.7px;letter-spacing:-0.1px">Job profiles and skills</div>
<div class="t r" style="left:493px;top:465.7px;letter-spacing:-0.1px">Default menu</div>
<svg style="left:623px;top:465px;" width="12" height="12" viewBox="0 0 12 12"><g transform="translate(0,0.04)"><rect x="0.5" y="0.5" width="11" height="11" fill="#fff" stroke="#868b92" stroke-width="1"/><rect x="2.3" y="2.3" width="7.4" height="7.4" fill="url(#cg)"/></g></svg>
<svg style="left:693px;top:465px;" width="12" height="12" viewBox="0 0 12 12"><g transform="translate(0,0.04)"><rect x="0.5" y="0.5" width="11" height="11" fill="#fff" stroke="#868b92" stroke-width="1"/><rect x="2.3" y="2.3" width="7.4" height="7.4" fill="url(#cg)"/></g></svg>
<div class="ln" style="left:160px;top:515.93px;width:660px"></div>
<svg style="left:211px;top:495px;" width="12" height="15" viewBox="0 0 12 15"><g transform="translate(0.5,0.33)"><path d="M0.9 0.7 H8.2 L10.6 3.1 V13.9 H0.9 Z" fill="#f6f8fc" stroke="#b3bdce" stroke-width=".8"/><path d="M0.7 14 H10.7 V3.4" fill="none" stroke="#5a6a83" stroke-width="1"/><path d="M8.2 0.7 V3.1 H10.6" fill="#dfe6f0" stroke="#7d8ba1" stroke-width=".7"/><path d="M2.6 3.8 H6.4 M2.6 6 H8.8 M2.6 8.2 H8.8 M2.6 10.4 H8.8" stroke="#c0cadb" stroke-width="1.1"/></g></svg>
<div class="t r" style="left:228px;top:495.7px;letter-spacing:-0.1px">Experience area</div>
<div class="t r" style="left:493px;top:495.7px;letter-spacing:-0.1px">Default menu</div>
<svg style="left:623px;top:494px;" width="12" height="12" viewBox="0 0 12 12"><g transform="translate(0,0.83)"><rect x="0.5" y="0.5" width="11" height="11" fill="#fff" stroke="#868b92" stroke-width="1"/><rect x="2.3" y="2.3" width="7.4" height="7.4" fill="url(#cg)" opacity=".6"/><path d="M3 6.2 L5.2 8.6 L9.2 2.8" fill="none" stroke="#484e66" stroke-width="1.7"/></g></svg>
<div class="a" style="left:616px;top:487.14px;width:0;height:0;border-top:5px solid #c40000;border-right:5px solid transparent"></div>
<div class="ln" style="left:160px;top:545.72px;width:660px"></div>
<svg style="left:211px;top:525px;" width="12" height="15" viewBox="0 0 12 15"><g transform="translate(0.5,0.12)"><path d="M0.9 0.7 H8.2 L10.6 3.1 V13.9 H0.9 Z" fill="#f6f8fc" stroke="#b3bdce" stroke-width=".8"/><path d="M0.7 14 H10.7 V3.4" fill="none" stroke="#5a6a83" stroke-width="1"/><path d="M8.2 0.7 V3.1 H10.6" fill="#dfe6f0" stroke="#7d8ba1" stroke-width=".7"/><path d="M2.6 3.8 H6.4 M2.6 6 H8.8 M2.6 8.2 H8.8 M2.6 10.4 H8.8" stroke="#c0cadb" stroke-width="1.1"/></g></svg>
<div class="t r" style="left:228px;top:524.7px;letter-spacing:-0.1px">Calendar</div>
<div class="t r" style="left:493px;top:524.7px;letter-spacing:-0.1px">Default menu</div>
<svg style="left:623px;top:524px;" width="12" height="12" viewBox="0 0 12 12"><g transform="translate(0,0.62)"><rect x="0.5" y="0.5" width="11" height="11" fill="#fff" stroke="#868b92" stroke-width="1"/><rect x="2.3" y="2.3" width="7.4" height="7.4" fill="url(#cg)"/></g></svg>
<div class="ln" style="left:160px;top:575.51px;width:660px"></div>
<svg style="left:211px;top:554px;" width="12" height="15" viewBox="0 0 12 15"><g transform="translate(0.5,0.91)"><path d="M0.9 0.7 H8.2 L10.6 3.1 V13.9 H0.9 Z" fill="#f6f8fc" stroke="#b3bdce" stroke-width=".8"/><path d="M0.7 14 H10.7 V3.4" fill="none" stroke="#5a6a83" stroke-width="1"/><path d="M8.2 0.7 V3.1 H10.6" fill="#dfe6f0" stroke="#7d8ba1" stroke-width=".7"/><path d="M2.6 3.8 H6.4 M2.6 6 H8.8 M2.6 8.2 H8.8 M2.6 10.4 H8.8" stroke="#c0cadb" stroke-width="1.1"/></g></svg>
<div class="t r" style="left:228px;top:554.7px;letter-spacing:-0.1px">ecc</div>
<div class="t r" style="left:493px;top:554.7px;letter-spacing:-0.1px">Default menu</div>
<svg style="left:623px;top:554px;" width="12" height="12" viewBox="0 0 12 12"><g transform="translate(0,0.41)"><rect x="0.5" y="0.5" width="11" height="11" fill="#fff" stroke="#868b92" stroke-width="1"/><rect x="2.3" y="2.3" width="7.4" height="7.4" fill="url(#cg)"/></g></svg>
<div class="ln" style="left:160px;top:605.30px;width:660px"></div>
<svg style="left:211px;top:584px;" width="12" height="15" viewBox="0 0 12 15"><g transform="translate(0.5,0.7)"><path d="M0.9 0.7 H8.2 L10.6 3.1 V13.9 H0.9 Z" fill="#f6f8fc" stroke="#b3bdce" stroke-width=".8"/><path d="M0.7 14 H10.7 V3.4" fill="none" stroke="#5a6a83" stroke-width="1"/><path d="M8.2 0.7 V3.1 H10.6" fill="#dfe6f0" stroke="#7d8ba1" stroke-width=".7"/><path d="M2.6 3.8 H6.4 M2.6 6 H8.8 M2.6 8.2 H8.8 M2.6 10.4 H8.8" stroke="#c0cadb" stroke-width="1.1"/></g></svg>
<div class="t r" style="left:228px;top:584.7px;letter-spacing:-0.1px">Create mentor sessions</div>
<div class="t r" style="left:493px;top:584.7px;letter-spacing:-0.1px">Default menu</div>
<svg style="left:623px;top:584px;" width="12" height="12" viewBox="0 0 12 12"><g transform="translate(0,0.2)"><rect x="0.5" y="0.5" width="11" height="11" fill="#fff" stroke="#868b92" stroke-width="1"/><rect x="2.3" y="2.3" width="7.4" height="7.4" fill="url(#cg)"/></g></svg>
<div class="ln" style="left:160px;top:635.09px;width:660px"></div>
<svg style="left:211px;top:614px;" width="12" height="15" viewBox="0 0 12 15"><g transform="translate(0.5,0.49)"><path d="M0.9 0.7 H8.2 L10.6 3.1 V13.9 H0.9 Z" fill="#f6f8fc" stroke="#b3bdce" stroke-width=".8"/><path d="M0.7 14 H10.7 V3.4" fill="none" stroke="#5a6a83" stroke-width="1"/><path d="M8.2 0.7 V3.1 H10.6" fill="#dfe6f0" stroke="#7d8ba1" stroke-width=".7"/><path d="M2.6 3.8 H6.4 M2.6 6 H8.8 M2.6 8.2 H8.8 M2.6 10.4 H8.8" stroke="#c0cadb" stroke-width="1.1"/></g></svg>
<div class="t r" style="left:228px;top:614.7px;letter-spacing:-0.1px">Record external course</div>
<div class="t r" style="left:493px;top:614.7px;letter-spacing:-0.1px">Default menu</div>
<svg style="left:623px;top:613px;" width="12" height="12" viewBox="0 0 12 12"><g transform="translate(0,0.99)"><rect x="0.5" y="0.5" width="11" height="11" fill="#fff" stroke="#868b92" stroke-width="1"/><rect x="2.3" y="2.3" width="7.4" height="7.4" fill="url(#cg)"/></g></svg>
<div class="ln" style="left:160px;top:664.88px;width:660px"></div>
<svg style="left:211px;top:644px;" width="12" height="15" viewBox="0 0 12 15"><g transform="translate(0.5,0.28)"><path d="M0.9 0.7 H8.2 L10.6 3.1 V13.9 H0.9 Z" fill="#f6f8fc" stroke="#b3bdce" stroke-width=".8"/><path d="M0.7 14 H10.7 V3.4" fill="none" stroke="#5a6a83" stroke-width="1"/><path d="M8.2 0.7 V3.1 H10.6" fill="#dfe6f0" stroke="#7d8ba1" stroke-width=".7"/><path d="M2.6 3.8 H6.4 M2.6 6 H8.8 M2.6 8.2 H8.8 M2.6 10.4 H8.8" stroke="#c0cadb" stroke-width="1.1"/></g></svg>
<div class="t r" style="left:228px;top:644.7px;letter-spacing:-0.1px">Request external course</div>
<div class="t r" style="left:493px;top:644.7px;letter-spacing:-0.1px">Default menu</div>
<svg style="left:623px;top:643px;" width="12" height="12" viewBox="0 0 12 12"><g transform="translate(0,0.78)"><rect x="0.5" y="0.5" width="11" height="11" fill="#fff" stroke="#868b92" stroke-width="1"/><rect x="2.3" y="2.3" width="7.4" height="7.4" fill="url(#cg)"/></g></svg>
<div class="ln" style="left:160px;top:694.67px;width:660px"></div>
<svg style="left:211px;top:674px;" width="12" height="15" viewBox="0 0 12 15"><g transform="translate(0.5,0.07)"><path d="M0.9 0.7 H8.2 L10.6 3.1 V13.9 H0.9 Z" fill="#f6f8fc" stroke="#b3bdce" stroke-width=".8"/><path d="M0.7 14 H10.7 V3.4" fill="none" stroke="#5a6a83" stroke-width="1"/><path d="M8.2 0.7 V3.1 H10.6" fill="#dfe6f0" stroke="#7d8ba1" stroke-width=".7"/><path d="M2.6 3.8 H6.4 M2.6 6 H8.8 M2.6 8.2 H8.8 M2.6 10.4 H8.8" stroke="#c0cadb" stroke-width="1.1"/></g></svg>
<div class="t r" style="left:228px;top:673.7px;letter-spacing:-0.1px">Management dashboard [Kopie]</div>
<div class="t r" style="left:493px;top:673.7px;letter-spacing:-0.1px">Dashboard</div>
<svg style="left:623px;top:673px;" width="12" height="12" viewBox="0 0 12 12"><g transform="translate(0,0.57)"><rect x="0.5" y="0.5" width="11" height="11" fill="#fff" stroke="#868b92" stroke-width="1"/><rect x="2.3" y="2.3" width="7.4" height="7.4" fill="url(#cg)"/></g></svg>
<div class="ln" style="left:160px;top:724.46px;width:660px"></div>
<svg style="left:211px;top:703px;" width="12" height="15" viewBox="0 0 12 15"><g transform="translate(0.5,0.86)"><path d="M0.9 0.7 H8.2 L10.6 3.1 V13.9 H0.9 Z" fill="#f6f8fc" stroke="#b3bdce" stroke-width=".8"/><path d="M0.7 14 H10.7 V3.4" fill="none" stroke="#5a6a83" stroke-width="1"/><path d="M8.2 0.7 V3.1 H10.6" fill="#dfe6f0" stroke="#7d8ba1" stroke-width=".7"/><path d="M2.6 3.8 H6.4 M2.6 6 H8.8 M2.6 8.2 H8.8 M2.6 10.4 H8.8" stroke="#c0cadb" stroke-width="1.1"/></g></svg>
<div class="t r" style="left:228px;top:703.7px;letter-spacing:-0.1px">Bookshelf</div>
<div class="t r" style="left:493px;top:703.7px;letter-spacing:-0.1px">Dashboard</div>
<svg style="left:623px;top:703px;" width="12" height="12" viewBox="0 0 12 12"><g transform="translate(0,0.36)"><rect x="0.5" y="0.5" width="11" height="11" fill="#fff" stroke="#868b92" stroke-width="1"/><rect x="2.3" y="2.3" width="7.4" height="7.4" fill="url(#cg)"/></g></svg>
<div class="ln" style="left:160px;top:754.25px;width:660px"></div>
<svg style="left:197px;top:734px;" width="13" height="12" viewBox="0 0 13 12"><g transform="translate(0,0.81)"><path d="M0 2.4 H5.4 L7.4 0.2 H12.2 V11.4 H0 Z" fill="#ebc17f"/><rect x="8" y="1.1" width="3.2" height=".7" fill="#fff" opacity=".85"/></g></svg>
<div class="t r" style="left:213.5px;top:733.7px;letter-spacing:-0.1px">Bookshelf2</div>
<div class="t r" style="left:493px;top:733.7px;letter-spacing:-0.1px">Structure</div>
<svg style="left:623px;top:733px;" width="12" height="12" viewBox="0 0 12 12"><g transform="translate(0,0.15)"><rect x="0.5" y="0.5" width="11" height="11" fill="#fff" stroke="#868b92" stroke-width="1"/><rect x="2.3" y="2.3" width="7.4" height="7.4" fill="url(#cg)"/></g></svg>
<div class="ln" style="left:160px;top:784.04px;width:660px"></div>
<svg style="left:197px;top:764px;" width="13" height="12" viewBox="0 0 13 12"><g transform="translate(0,0.6)"><path d="M0 2.4 H5.4 L7.4 0.2 H12.2 V11.4 H0 Z" fill="#ebc17f"/><rect x="8" y="1.1" width="3.2" height=".7" fill="#fff" opacity=".85"/></g></svg>
<svg style="left:185px;top:762px;" width="9" height="9" viewBox="0 0 9 9"><g transform="translate(0,0.94)"><rect x="0.5" y="0.5" width="7.6" height="7.4" fill="#fff" stroke="#858585" stroke-width="1"/><rect x="2.2" y="3.4" width="4.2" height="1.6" fill="#b5b5b5"/><rect x="3.5" y="2.1" width="1.6" height="4.2" fill="#b5b5b5"/></g></svg>
<div class="t r" style="left:213.5px;top:763.7px;letter-spacing:-0.1px">Managers</div>
<div class="t r" style="left:493px;top:763.7px;letter-spacing:-0.1px">Category</div>
<svg style="left:623px;top:762px;" width="12" height="12" viewBox="0 0 12 12"><g transform="translate(0,0.94)"><rect x="0.5" y="0.5" width="11" height="11" fill="#fff" stroke="#868b92" stroke-width="1"/><rect x="2.3" y="2.3" width="7.4" height="7.4" fill="url(#cg)"/></g></svg>
<div class="ln" style="left:160px;top:813.83px;width:660px"></div>
<svg style="left:197px;top:794px;" width="13" height="12" viewBox="0 0 13 12"><g transform="translate(0,0.38)"><path d="M0 2.4 H5.4 L7.4 0.2 H12.2 V11.4 H0 Z" fill="#ebc17f"/><rect x="8" y="1.1" width="3.2" height=".7" fill="#fff" opacity=".85"/></g></svg>
<svg style="left:185px;top:792px;" width="9" height="9" viewBox="0 0 9 9"><g transform="translate(0,0.73)"><rect x="0.5" y="0.5" width="7.6" height="7.4" fill="#fff" stroke="#858585" stroke-width="1"/><rect x="2.2" y="3.4" width="4.2" height="1.6" fill="#b5b5b5"/><rect x="3.5" y="2.1" width="1.6" height="4.2" fill="#b5b5b5"/></g></svg>
<div class="t r" style="left:213.5px;top:793.7px;letter-spacing:-0.1px">Tutoring/training</div>
<div class="t r" style="left:493px;top:793.7px;letter-spacing:-0.1px">Category</div>
<svg style="left:623px;top:792px;" width="12" height="12" viewBox="0 0 12 12"><g transform="translate(0,0.73)"><rect x="0.5" y="0.5" width="11" height="11" fill="#fff" stroke="#868b92" stroke-width="1"/><rect x="2.3" y="2.3" width="7.4" height="7.4" fill="url(#cg)"/></g></svg>
<div class="ln" style="left:160px;top:843.62px;width:660px"></div>
<svg style="left:197px;top:824px;" width="13" height="12" viewBox="0 0 13 12"><g transform="translate(0,0.17)"><path d="M0 2.4 H5.4 L7.4 0.2 H12.2 V11.4 H0 Z" fill="#ebc17f"/><rect x="8" y="1.1" width="3.2" height=".7" fill="#fff" opacity=".85"/></g></svg>
<svg style="left:185px;top:822px;" width="9" height="9" viewBox="0 0 9 9"><g transform="translate(0,0.52)"><rect x="0.5" y="0.5" width="7.6" height="7.4" fill="#fff" stroke="#858585" stroke-width="1"/><rect x="2.2" y="3.4" width="4.2" height="1.6" fill="#b5b5b5"/><rect x="3.5" y="2.1" width="1.6" height="4.2" fill="#b5b5b5"/></g></svg>
<div class="t r" style="left:213.5px;top:822.7px;letter-spacing:-0.1px">Admin</div>
<div class="t r" style="left:493px;top:822.7px;letter-spacing:-0.1px">Category</div>
<svg style="left:623px;top:822px;" width="12" height="12" viewBox="0 0 12 12"><g transform="translate(0,0.52)"><rect x="0.5" y="0.5" width="11" height="11" fill="#fff" stroke="#868b92" stroke-width="1"/><rect x="2.3" y="2.3" width="7.4" height="7.4" fill="url(#cg)"/></g></svg>
<div class="ln" style="left:160px;top:873.41px;width:660px"></div>
<svg style="left:195px;top:853px;" width="16" height="13" viewBox="0 0 16 13"><g transform="translate(0.5,0.16)"><path d="M1 11.4 V3.6 H7.6 L9.6 1.6 H12.6 V5.2" fill="none" stroke="#ebc17f" stroke-width="1.1"/><path d="M0.6 12.2 L3.4 5.4 H14.8 L12 12.2 Z" fill="#ebc17f"/></g></svg>
<svg style="left:185px;top:852px;" width="9" height="9" viewBox="0 0 9 9"><g transform="translate(0,0.31)"><rect x="0.5" y="0.5" width="7.6" height="7.4" fill="#fff" stroke="#858585" stroke-width="1"/><rect x="2.2" y="3.3" width="4.2" height="1.5" fill="#b5b5b5"/></g></svg>
<div class="t r" style="left:213.5px;top:852.7px;letter-spacing:-0.1px">Main navigation for all categories</div>
<div class="t r" style="left:493px;top:852.7px;letter-spacing:-0.1px">Main navigation</div>
<svg style="left:623px;top:852px;" width="12" height="12" viewBox="0 0 12 12"><g transform="translate(0,0.31)"><rect x="0.5" y="0.5" width="11" height="11" fill="#fff" stroke="#868b92" stroke-width="1"/><rect x="2.3" y="2.3" width="7.4" height="7.4" fill="url(#cg)" opacity=".6"/><path d="M3 6.2 L5.2 8.6 L9.2 2.8" fill="none" stroke="#484e66" stroke-width="1.7"/></g></svg>
<div class="a" style="left:616px;top:844.62px;width:0;height:0;border-top:5px solid #c40000;border-right:5px solid transparent"></div>
<svg style="left:211px;top:882px;" width="12" height="15" viewBox="0 0 12 15"><g transform="translate(0.5,0.6)"><path d="M0.9 0.7 H8.2 L10.6 3.1 V13.9 H0.9 Z" fill="#f6f8fc" stroke="#b3bdce" stroke-width=".8"/><path d="M0.7 14 H10.7 V3.4" fill="none" stroke="#5a6a83" stroke-width="1"/><path d="M8.2 0.7 V3.1 H10.6" fill="#dfe6f0" stroke="#7d8ba1" stroke-width=".7"/><path d="M2.6 3.8 H6.4 M2.6 6 H8.8 M2.6 8.2 H8.8 M2.6 10.4 H8.8" stroke="#c0cadb" stroke-width="1.1"/></g></svg>
<div class="t r" style="left:228px;top:882.7px;letter-spacing:-0.1px">Search</div>
<div class="t r" style="left:493px;top:882.7px;letter-spacing:-0.1px">Special function</div>
<svg style="left:623px;top:882px;" width="12" height="12" viewBox="0 0 12 12"><g transform="translate(0,0.1)"><rect x="0.5" y="0.5" width="11" height="11" fill="#fff" stroke="#868b92" stroke-width="1"/><rect x="2.3" y="2.3" width="7.4" height="7.4" fill="url(#cg)"/></g></svg>
<div class="a" style="left:106px;top:177px;width:714px;height:726px;box-shadow:inset 0 5px 5px -2px rgba(0,0,0,.42),inset 4px 0 4px -2px rgba(0,0,0,.22),inset -4px 0 4px -2px rgba(0,0,0,.22);pointer-events:none"></div>
<div class="a" style="left:106px;top:730px;width:1px;height:173px;background:#000"></div>
<div class="a" style="left:107px;top:906px;width:716px;height:1px;background:#cdd5e3"></div>
</body></html>
